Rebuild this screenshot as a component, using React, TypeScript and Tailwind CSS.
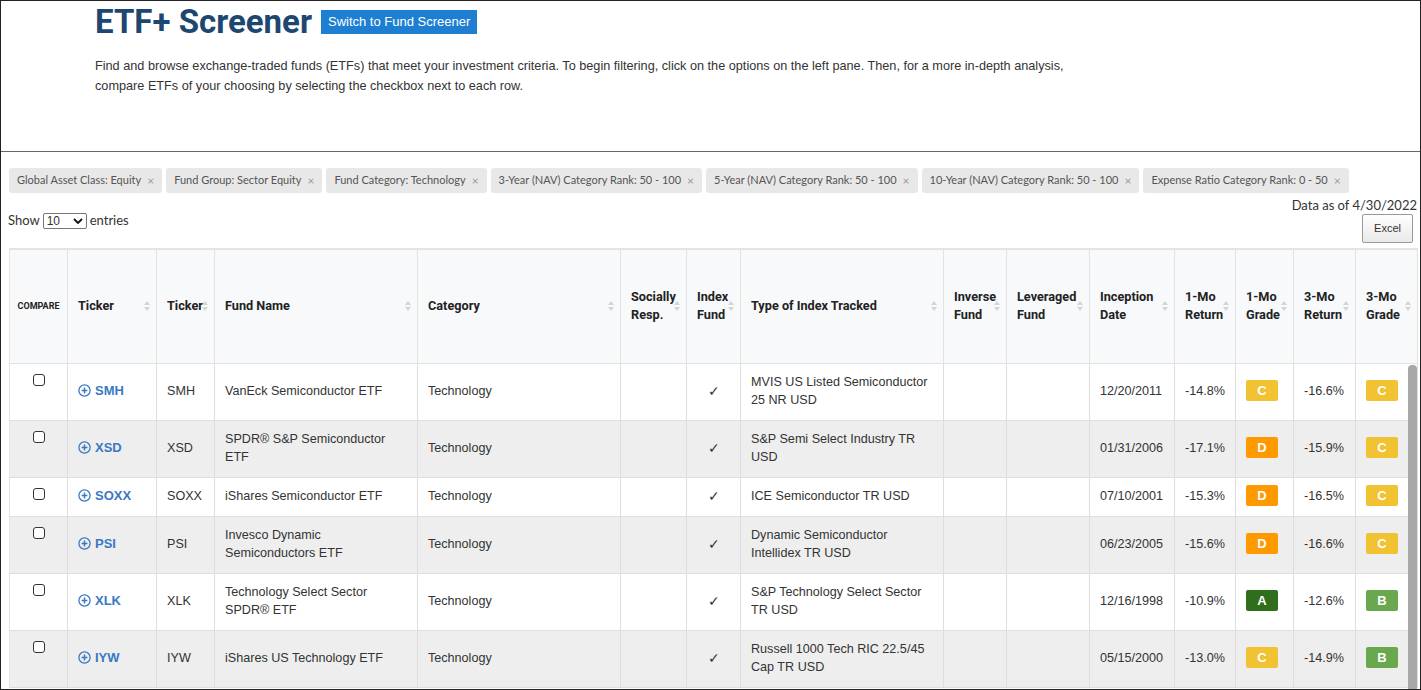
import React from 'react';

type Row = {
  ticker: string;
  name: string;
  index: string;
  date: string;
  r1: string;
  g1: string;
  r3: string;
  g3: string;
};

const rows: Row[] = [
  { ticker: 'SMH', name: 'VanEck Semiconductor ETF', index: 'MVIS US Listed Semiconductor 25 NR USD', date: '12/20/2011', r1: '-14.8%', g1: 'C', r3: '-16.6%', g3: 'C' },
  { ticker: 'XSD', name: 'SPDR® S&P Semiconductor ETF', index: 'S&P Semi Select Industry TR USD', date: '01/31/2006', r1: '-17.1%', g1: 'D', r3: '-15.9%', g3: 'C' },
  { ticker: 'SOXX', name: 'iShares Semiconductor ETF', index: 'ICE Semiconductor TR USD', date: '07/10/2001', r1: '-15.3%', g1: 'D', r3: '-16.5%', g3: 'C' },
  { ticker: 'PSI', name: 'Invesco Dynamic Semiconductors ETF', index: 'Dynamic Semiconductor Intellidex TR USD', date: '06/23/2005', r1: '-15.6%', g1: 'D', r3: '-16.6%', g3: 'C' },
  { ticker: 'XLK', name: 'Technology Select Sector SPDR® ETF', index: 'S&P Technology Select Sector TR USD', date: '12/16/1998', r1: '-10.9%', g1: 'A', r3: '-12.6%', g3: 'B' },
  { ticker: 'IYW', name: 'iShares US Technology ETF', index: 'Russell 1000 Tech RIC 22.5/45 Cap TR USD', date: '05/15/2000', r1: '-13.0%', g1: 'C', r3: '-14.9%', g3: 'B' },
];

const chips = [
  'Global Asset Class: Equity',
  'Fund Group: Sector Equity',
  'Fund Category: Technology',
  '3-Year (NAV) Category Rank: 50 - 100',
  '5-Year (NAV) Category Rank: 50 - 100',
  '10-Year (NAV) Category Rank: 50 - 100',
  'Expense Ratio Category Rank: 0 - 50',
];

const gradeColor: Record<string, string> = {
  A: 'bg-[#2f6e1c]',
  B: 'bg-[#6aa84f]',
  C: 'bg-[#f1c232]',
  D: 'bg-[#ff9900]',
};

const cols = [58, 89, 58, 203, 203, 66, 54, 203, 63, 83, 85, 61, 58, 62, 62];

const headers: (string | null)[] = [
  null,
  'Ticker',
  'Ticker',
  'Fund Name',
  'Category',
  'Socially Resp.',
  'Index Fund',
  'Type of Index Tracked',
  'Inverse Fund',
  'Leveraged Fund',
  'Inception Date',
  '1-Mo Return',
  '1-Mo Grade',
  '3-Mo Return',
  '3-Mo Grade',
];

function SortIcon() {
  return (
    <span className="absolute right-[6px] top-1/2 -translate-y-1/2 flex flex-col gap-[2px]">
      <svg width="6" height="4" viewBox="0 0 6 4">
        <path d="M0 4L3 0L6 4Z" fill="#d4d4d4" />
      </svg>
      <svg width="6" height="4" viewBox="0 0 6 4">
        <path d="M0 0L3 4L6 0Z" fill="#d4d4d4" />
      </svg>
    </span>
  );
}

function PlusCircle() {
  return (
    <svg width="13" height="13" viewBox="0 0 13 13" className="shrink-0">
      <circle cx="6.5" cy="6.5" r="5.6" fill="none" stroke="#3a78c4" strokeWidth="1.3" />
      <path d="M6.5 3.6V9.4M3.6 6.5H9.4" stroke="#3a78c4" strokeWidth="1.5" />
    </svg>
  );
}

function Badge({ g }: { g: string }) {
  return (
    <div className="flex items-center h-[18px]">
      <span
        className={`inline-block shrink-0 w-[32px] h-[21px] rounded-[2px] text-center text-[13px] leading-[21px] font-bold text-white ${gradeColor[g]}`}>
        {g}
      </span>
    </div>
  );
}

export default function App() {
  const td = 'border-r border-b border-[#dedede] px-[10px] pt-[9px] pb-[11px] align-middle';
  return (
    <div className="relative w-[1421px] h-[690px] overflow-hidden border border-[#222] bg-white text-[#333] font-['Liberation_Sans',Arial,sans-serif]">
      {/* header */}
      <div className="h-[151px] border-b border-[#666] pl-[94px] pt-[1px]">
        <div className="flex items-center gap-[9px] h-[40px]">
          <h1 className="font-['Roboto',sans-serif] text-[33px] font-bold leading-[40px] text-[#1d4670]">ETF+ Screener</h1>
          <button className="h-[24px] px-[7px] bg-[#1e7fd2] text-white text-[13px] leading-[24px]">
            Switch to Fund Screener
          </button>
        </div>
        <p className="mt-[14px] text-[12.7px] leading-[20px] text-[#333]">
          Find and browse exchange-traded funds (ETFs) that meet your investment criteria. To begin filtering, click on the options on the left pane. Then, for a more in-depth analysis,
          <br />
          compare ETFs of your choosing by selecting the checkbox next to each row.
        </p>
      </div>

      {/* filter chips */}
      <div className="flex gap-[4px] pl-[8px] mt-[16px] font-['Lato',sans-serif]">
        {chips.map((c) => (
          <span
            key={c}
            className="flex items-center h-[25px] px-[8px] rounded-[3px] bg-[#e8e8e8] text-[11px] text-[#555] whitespace-nowrap">
            {c}
            <span className="ml-[6px] text-[12px] text-[#999]">×</span>
          </span>
        ))}
      </div>

      {/* controls */}
      <div className="flex justify-between pl-[7px] pr-[3px] h-[56px] font-['Lato',sans-serif] text-[13px] text-[#333]">
        <div className="flex items-center h-[16px] mt-[20px] gap-[3px]">
          Show
          <span className="flex items-center justify-between w-[44px] h-[16px] border border-[#767676] rounded-[2px] px-[3px] text-[12px] leading-[14px] font-['Liberation_Sans',Arial,sans-serif]">
            10
            <svg width="10" height="6" viewBox="0 0 10 6">
              <path d="M1 1L5 5L9 1" fill="none" stroke="#111" strokeWidth="1.8" />
            </svg>
          </span>
          entries
        </div>
        <div className="flex flex-col items-end">
          <span className="mt-[4px] leading-[16px]">Data as of 4/30/2022</span>
          <button className="mt-[1px] mr-[4px] w-[51px] h-[29px] rounded-[2px] border border-[#999] bg-gradient-to-b from-white to-[#e9e9e9] text-[11px] text-[#333] font-['Liberation_Sans',Arial,sans-serif]">
            Excel
          </button>
        </div>
      </div>

      {/* table */}
      <table className="-mt-[1px] ml-[8px] table-fixed border-collapse border-t-2 border-l border-[#e4e4e4] text-[12.6px] leading-[18px] w-[1408px]">
        <colgroup>
          {cols.map((w, i) => (
            <col key={i} style={{ width: w }} />
          ))}
        </colgroup>
        <thead>
          <tr className="h-[114px] bg-[#f8f9fb]">
            {headers.map((h, i) =>
              h === null ? (
                <th
                  key={i}
                  className="border-r border-b border-[#e2e2e2] text-center align-middle font-['Roboto',sans-serif] text-[9px] font-bold text-[#222]">
                  COMPARE
                </th>
              ) : (
                <th
                  key={i}
                  className="relative border-r border-b border-[#e2e2e2] pl-[10px] pr-[3px] text-left align-middle font-['Roboto',sans-serif] text-[12.7px] font-bold leading-[18px] text-[#222]">
                  {h}
                  <SortIcon />
                </th>
              ),
            )}
          </tr>
        </thead>
        <tbody>
          {rows.map((r, i) => (
            <tr key={r.ticker} className={i % 2 === 1 ? 'bg-[#eeeeee]' : 'bg-white'}>
              <td className="border-r border-b border-[#dedede] pt-[9px] align-top text-center">
                <span className="inline-block w-[12px] h-[12px] rounded-[3px] border border-[#333] bg-white" />
              </td>
              <td className={td}>
                <span className="flex items-center gap-[4px] text-[13px] font-bold text-[#3a78c4]">
                  <PlusCircle />
                  {r.ticker}
                </span>
              </td>
              <td className={td}>{r.ticker}</td>
              <td className={td}>{r.name}</td>
              <td className={td}>Technology</td>
              <td className={td}></td>
              <td className={`${td} text-center text-[14px]`}>✓</td>
              <td className={td}>{r.index}</td>
              <td className={td}></td>
              <td className={td}></td>
              <td className={td}>{r.date}</td>
              <td className={td}>{r.r1}</td>
              <td className={td}>
                <Badge g={r.g1} />
              </td>
              <td className={td}>{r.r3}</td>
              <td className={td}>
                <Badge g={r.g3} />
              </td>
            </tr>
          ))}
        </tbody>
      </table>

      {/* vertical scrollbar thumb */}
      <div className="absolute left-[1407px] top-[364px] bottom-0 w-[9px] rounded-t-[4px] bg-[#a8a8a8]" />
    </div>
  );
}
